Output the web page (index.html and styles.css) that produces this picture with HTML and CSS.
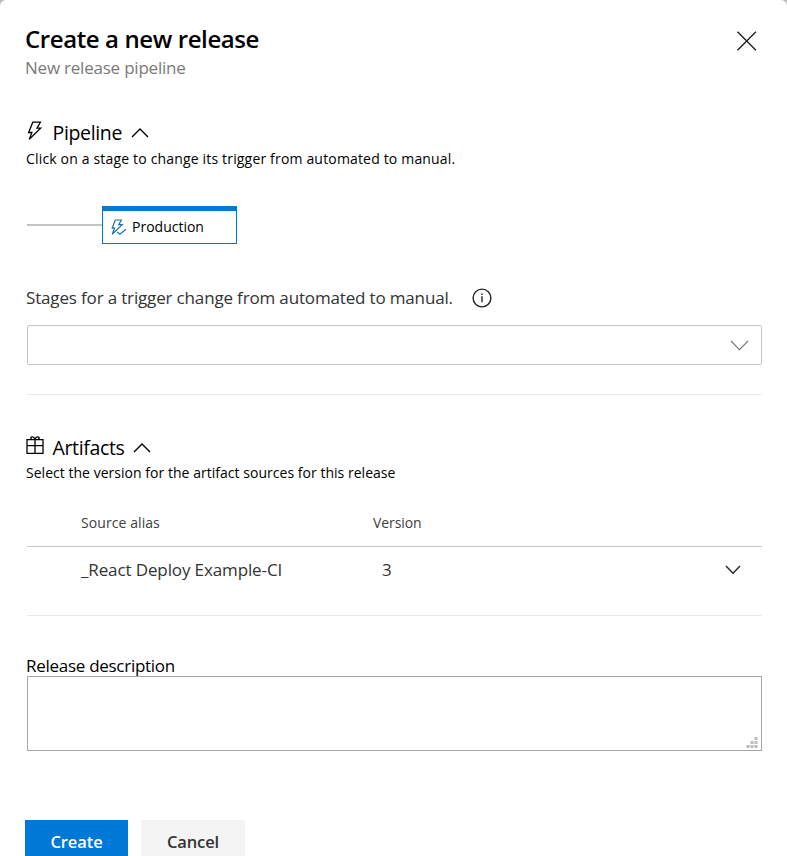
FILE: index.html
```html
<!DOCTYPE html>
<html lang="en">
<head>
<meta charset="utf-8">
<title>Create a new release</title>
<link rel="stylesheet" href="styles.css">
</head>
<body>
<main class="panel">
  <header class="header">
    <div>
      <h1 class="title"><span>Create a new release</span></h1>
      <p class="subtitle"><span>New release pipeline</span></p>
    </div>
    <svg class="close" width="20" height="20" viewBox="0 0 20 20"><path d="M.5.7l18.4 18.6M18.9.7L.5 19.3"/></svg>
  </header>

  <section class="pipeline">
    <div class="section-head">
      <svg class="section-icon bolt" width="18" height="20" viewBox="0 0 18 20"><path d="M6.8 1.2h7.6l-3.4 5.9h3.6L3.3 18.2l2.6-6.7H2.6z"/></svg>
      <h2 class="heading heading-pipeline">Pipeline</h2>
      <svg class="chevron-up" width="18" height="10" viewBox="0 0 18 10"><path d="M1 9l8-8 8 8"/></svg>
    </div>
    <p class="hint hint-pipeline">Click on a stage to change its trigger from automated to manual.</p>
    <div class="graph">
      <div class="connector"></div>
      <div class="stage">
        <svg width="16" height="17" viewBox="0 0 16 17"><path d="M4.3 1h6L7.8 5.6h3.4L1.2 15.2l2.4-6H1.2z"/><path d="M6.2 13l2.6 2.3 6.2-5.1"/></svg>
        <span class="stage-name">Production</span>
      </div>
    </div>
  </section>

  <div class="field-label">
    <span class="stages-label">Stages for a trigger change from automated to manual.</span>
    <svg width="20" height="20" viewBox="0 0 20 20"><circle cx="10" cy="10" r="8.9"/><path d="M10 8.3v6M10 5.4v1.7"/></svg>
  </div>
  <div class="select">
    <svg width="19" height="11" viewBox="0 0 19 11"><path d="M1 1l8.5 8.7L18 1"/></svg>
  </div>

  <section class="artifacts">
    <div class="section-head">
      <svg class="section-icon gift" width="18" height="20" viewBox="0 0 18 20"><path d="M1 3.7h16v13.6H1zM9 3.7v13.6M1 9.7h16M9 3.7C7.5 3.7 4.8 3.4 4.8 2.2 4.8.2 8.3.2 9 3.7c.7-3.5 4.2-3.5 4.2-1.5C13.2 3.4 10.5 3.7 9 3.7z"/></svg>
      <h2 class="heading heading-artifacts">Artifacts</h2>
      <svg class="chevron-up" width="18" height="10" viewBox="0 0 18 10"><path d="M1 9l8-8 8 8"/></svg>
    </div>
    <p class="hint hint-artifacts">Select the version for the artifact sources for this release</p>
    <div class="table-head">
      <span class="col-source">Source alias</span>
      <span class="col-version">Version</span>
    </div>
    <div class="table-row">
      <span class="cell-source">_React Deploy Example-CI</span>
      <span class="cell-version">3</span>
      <svg width="16" height="10" viewBox="0 0 16 10"><path d="M1 1l7 7.2L15 1"/></svg>
    </div>
  </section>

  <label class="description-label" for="description"><span>Release description</span></label>
  <div class="description">
    <textarea id="description"></textarea>
    <svg class="grip" width="12" height="11" viewBox="0 0 12 11"><path d="M8 0h4v3H8zM4 4h8v3H4zM0 8h12v3H0z" fill="#d9d9d9"/><path d="M9 0h2v3H9zM5 4h2v3H5zM9 4h2v3H9zM1 8h2v3H1zM5 8h2v3H5zM9 8h2v3H9z" fill="#bdbdbd"/></svg>
  </div>

  <footer class="actions">
    <button class="button primary">Create</button>
    <button class="button secondary">Cancel</button>
  </footer>
</main>
</body>
</html>
```
FILE: styles.css
```css
* { box-sizing: border-box; }
html, body { height: 100%; margin: 0; }
body {
  overflow: hidden;
  background: #bcbcbc;
  color: #000;
  font-family: "Open Sans", "Noto Sans", sans-serif;
}
h1, h2, p { margin: 0; font-weight: 400; white-space: nowrap; }
svg { display: block; flex: none; fill: none; stroke: #222; stroke-width: 1.4; }
.panel {
  height: 856px;
  overflow: hidden;
  padding: 23px 25px 0 27px;
  background: #fff;
  border-radius: 6px 6px 0 0;
}
.header { display: flex; justify-content: space-between; height: 96px; margin-left: -2px; }
.title { font-size: 24px; line-height: 32px; font-weight: 600; letter-spacing: -.4px; }
.subtitle { margin-top: 1px; font-size: 17px; line-height: 24px; letter-spacing: -.22px; color: #7a7a7a; }
.close { margin: 8px 5px 0 0; stroke: #1a1a1a; stroke-width: 1.3; }

.section-head { display: flex; height: 28px; margin-left: -1px; }
.section-icon { margin: 2px 8.5px 0 0; stroke: #000; stroke-width: 1.3; }
.heading { font-size: 19.5px; line-height: 28px; letter-spacing: -.35px; }
.chevron-up { margin: 9px 0 0 8.5px; stroke: #000; }
.hint { margin: 2px 0 0 -1px; font-size: 14px; line-height: 20px; }
.hint-pipeline { letter-spacing: .17px; }
.hint-artifacts { margin-top: 1px; letter-spacing: .03px; }
.graph { display: flex; margin-top: 37px; height: 38px; }
.connector { width: 75px; height: 2px; margin-top: 18px; background: #c4c4c4; }
.stage {
  display: flex;
  align-items: center;
  gap: 5px;
  width: 135px;
  padding-left: 8px;
  border: 1px solid #0078d4;
  border-top-width: 5px;
  font-size: 14px;
  line-height: 20px;
}
.stage svg { stroke: #1a70b0; stroke-width: 1.2; }

.field-label { display: flex; gap: 19px; margin: 42px 0 0 -1px; height: 39px; font-size: 17px; line-height: 24px; letter-spacing: -.16px; color: #333; }
.stages-label { white-space: nowrap; }
.field-label svg { margin-top: 2px; }
.select { display: flex; align-items: center; justify-content: flex-end; height: 40px; padding-right: 12px; border: 1px solid #c6c6c6; border-radius: 2px; }
.select svg { stroke: #777; stroke-width: 1.2; }

.artifacts { margin-top: 29px; padding-top: 39px; border-top: 1px solid #eaeaea; border-bottom: 1px solid #eaeaea; height: 222px; }
.table-head { display: flex; height: 34px; margin-top: 30px; border-bottom: 1px solid #c6c6c6; padding-left: 54px; font-size: 14px; line-height: 20px; color: #404040; }
.table-head .col-source { width: 292px; letter-spacing: .08px; }
.table-head .col-version { letter-spacing: -.1px; }
.table-row { display: flex; padding: 11px 21px 0 54px; font-size: 17px; line-height: 24px; letter-spacing: -.12px; color: #333; }
.cell-source { width: 301px; }
.table-row svg { margin: 7px 0 0 auto; }

.description-label { display: block; height: 22px; margin: 38px 0 0 -1px; font-size: 17px; line-height: 24px; letter-spacing: -.28px; }
.description { position: relative; height: 75px; }
.description textarea { display: block; width: 100%; height: 75px; border: 1px solid #a6a6a6; border-radius: 0; resize: none; background: #fff; outline: none; }
.grip { position: absolute; right: 4px; bottom: 3px; stroke: none; }
.actions { display: flex; gap: 13px; margin: 69px 0 0 -2px; }
.button { height: 44px; border: 0; padding: 0; font: 600 16.5px/24px "Open Sans", "Noto Sans", sans-serif; letter-spacing: -.1px; }
.primary { width: 103px; background: #0078d7; color: #fff; }
.secondary { width: 104px; background: #f4f4f4; color: #333; }
```
